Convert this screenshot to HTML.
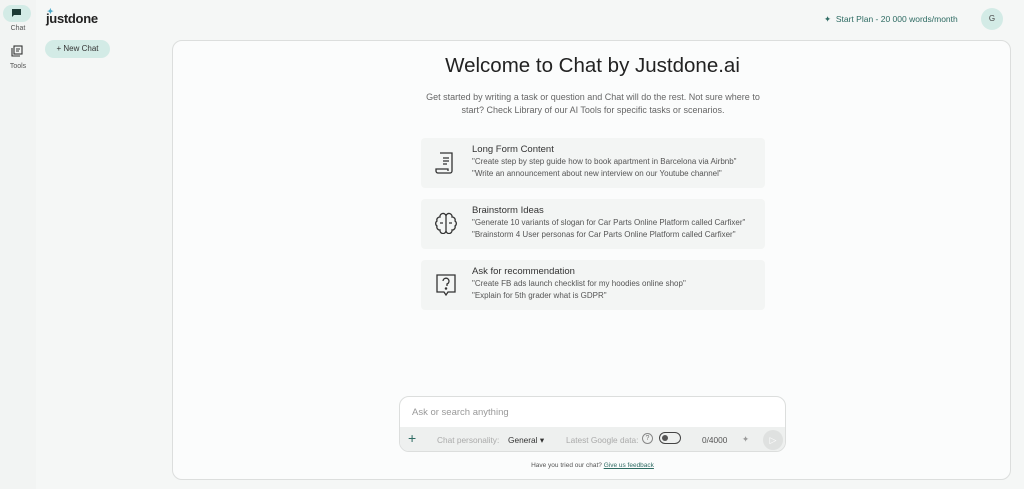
<!DOCTYPE html>
<html><head><meta charset="utf-8"><style>
*{box-sizing:border-box;margin:0;padding:0}
body{width:1024px;height:489px;background:#f5f7f6;font-family:"Liberation Sans",sans-serif;position:relative;overflow:hidden;color:#333}
.side{position:absolute;left:0;top:0;width:36px;height:489px;background:#f2f4f3}
.navbtn{position:absolute;left:3px;top:5px;width:28px;height:17px;border-radius:9px;background:#d3ebe6}
.lbl{position:absolute;font-size:7px;color:#555;width:36px;text-align:center}
.logo{position:absolute;left:46px;top:11px;font-size:13px;font-weight:bold;color:#222;letter-spacing:-0.3px}
.new{position:absolute;left:45px;top:40px;width:65px;height:18px;border-radius:9px;background:#d3ebe6;font-size:8px;color:#333;text-align:center;line-height:18px}
.plan{position:absolute;left:824px;top:14px;font-size:8.5px;color:#2e6b63}
.av{position:absolute;left:981px;top:8px;width:22px;height:22px;border-radius:50%;background:#d3ebe6;font-size:8px;color:#444;text-align:center;line-height:22px}
.main{position:absolute;left:172px;top:40px;width:839px;height:440px;border:1px solid #dcdedd;border-radius:10px;background:#fbfcfc}
h1{position:absolute;left:0;width:839px;top:13px;text-align:center;font-size:20.5px;font-weight:normal;color:#222}
.sub{position:absolute;left:244px;width:352px;top:50px;text-align:center;font-size:9px;line-height:13px;color:#666}
.card{position:absolute;left:248px;width:344px;height:50px;background:#f3f5f4;border-radius:4px}
.card b{position:absolute;left:51px;top:6px;font-weight:normal;font-size:9.5px;color:#333}
.card p{position:absolute;left:51px;font-size:8px;color:#555;white-space:nowrap}
.card svg{position:absolute;left:14px;top:13px}
.inp{position:absolute;left:226px;top:355px;width:387px;height:56px;border:1px solid #dcdedd;border-radius:10px;background:#fff;overflow:hidden}
.inp .ph{position:absolute;left:12px;top:10px;font-size:9.5px;color:#999}
.bar{position:absolute;left:0;top:30px;width:387px;height:26px;background:#eef0ef;font-size:8.3px;color:#aaa}
.bar span{position:absolute;top:8px}
.fb{position:absolute;left:0;width:839px;top:421px;text-align:center;font-size:6.5px;color:#555}
</style></head><body>
<div class="side">
<div class="navbtn"></div>
<svg style="position:absolute;left:11px;top:8px" width="11" height="10" viewBox="0 0 11 10"><path d="M1 1h9v6H3L1 9z" fill="#1d3a35"/></svg>
<div class="lbl" style="top:25px">Chat</div>
<svg style="position:absolute;left:11px;top:45px" width="12" height="12" viewBox="0 0 12 12" fill="none" stroke="#333" stroke-width="1.1"><rect x="3" y="1" width="8" height="8"/><path d="M1 3v8h8M5 4h4M5 6h3"/></svg>
<div class="lbl" style="top:63px">Tools</div>
</div>
<div class="logo"><span style="color:#4aa8c8;font-size:8px;position:absolute;left:1px;top:-4px">✦</span>justdone</div>
<div class="new">+ New Chat</div>
<div class="plan">✦&nbsp;&nbsp;Start Plan - 20 000 words/month</div>
<div class="av">G</div>
<div class="main">
<h1>Welcome to Chat by Justdone.ai</h1>
<div class="sub">Get started by writing a task or question and Chat will do the rest. Not sure where to start? Check Library of our AI Tools for specific tasks or scenarios.</div>
<div class="card" style="top:97px">
<svg width="22" height="24" viewBox="0 0 22 24" fill="none" stroke="#333" stroke-width="1.3"><path d="M5 2h12v18a2 2 0 0 1-2 2H3a2 2 0 0 1-2-2v-2h12v2"/><path d="M8 7h6M8 10h6M8 13h4"/></svg>
<b>Long Form Content</b><p style="top:19px">"Create step by step guide how to book apartment in Barcelona via Airbnb"</p><p style="top:31px">"Write an announcement about new interview on our Youtube channel"</p></div>
<div class="card" style="top:158px">
<svg width="22" height="22" viewBox="0 0 22 22" fill="none" stroke="#333" stroke-width="1.3"><path d="M11 2v18M11 4a3 3 0 0 0-6 1 3 3 0 0 0-3 4 3 3 0 0 0 0 5 3 3 0 0 0 3 4 3 3 0 0 0 6 1M11 4a3 3 0 0 1 6 1 3 3 0 0 1 3 4 3 3 0 0 1 0 5 3 3 0 0 1-3 4 3 3 0 0 1-6 1M5 11h3M14 11h3"/></svg>
<b>Brainstorm Ideas</b><p style="top:19px">"Generate 10 variants of slogan for Car Parts Online Platform called Carfixer"</p><p style="top:31px">"Brainstorm 4 User personas for Car Parts Online Platform called Carfixer"</p></div>
<div class="card" style="top:219px">
<svg width="22" height="24" viewBox="0 0 22 24" fill="none" stroke="#333" stroke-width="1.3"><path d="M2 2h18v17h-7l-2 3-2-3H2z"/><path d="M8 8a3 3 0 1 1 4 3v2"/><circle cx="11" cy="15.5" r=".6" fill="#333"/></svg>
<b>Ask for recommendation</b><p style="top:19px">"Create FB ads launch checklist for my hoodies online shop"</p><p style="top:31px">"Explain for 5th grader what is GDPR"</p></div>
<div class="inp"><div class="ph">Ask or search anything</div>
<div class="bar">
<span style="left:8px;top:3px;font-size:14px;color:#2e6b63">+</span>
<span style="left:37px">Chat personality:</span>
<span style="left:108px;color:#333">General ▾</span>
<span style="left:166px">Latest Google data:</span>
<span style="left:242px;top:6px;width:11px;height:11px;border:1px solid #888;border-radius:50%;font-size:7px;color:#777;text-align:center;line-height:9px">?</span>
<span style="left:259px;top:5px;width:22px;height:12px;border:1.3px solid #444;border-radius:6px"><i style="position:absolute;left:2px;top:2px;width:6px;height:6px;border-radius:50%;background:#555"></i></span>
<span style="left:302px;color:#555">0/4000</span>
<span style="left:342px;top:7px;color:#999">✦</span>
<span style="left:363px;top:3px;width:20px;height:20px;border-radius:50%;background:#dfe1e0;color:#fff;font-size:9px;text-align:center;line-height:20px">▷</span>
</div></div>
<div class="fb">Have you tried our chat? <u style="color:#2e6b63">Give us feedback</u></div>
</div>
</body></html>
